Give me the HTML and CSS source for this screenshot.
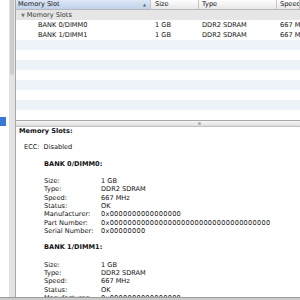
FILE: index.html
```html
<!DOCTYPE html>
<html lang="en">
<head>
  <meta charset="UTF-8" />
  <title>System Profiler - Memory</title>
  <link rel="stylesheet" href="styles.css">
</head>
<body>
  <div class="window">
    <div class="sidebar">
      <div class="source-item selected"></div>
    </div>
    <div class="scroller"><div class="thumb"></div></div>

    <div class="main">
      <div class="table">
        <div class="row head">
          <div class="cell c1 sorted">Memory Slot <span class="arrow">▲</span></div>
          <div class="cell c2">Size</div>
          <div class="cell c3">Type</div>
          <div class="cell c4">Speed</div>
        </div>
        <div class="row group">
          <div class="cell c1"><span class="disclosure">▼</span>Memory Slots</div>
          <div class="cell c2"></div>
          <div class="cell c3"></div>
          <div class="cell c4"></div>
        </div>
        <div class="row">
          <div class="cell c1 child">BANK 0/DIMM0</div>
          <div class="cell c2">1 GB</div>
          <div class="cell c3">DDR2 SDRAM</div>
          <div class="cell c4">667 MHz</div>
        </div>
        <div class="row">
          <div class="cell c1 child">BANK 1/DIMM1</div>
          <div class="cell c2">1 GB</div>
          <div class="cell c3">DDR2 SDRAM</div>
          <div class="cell c4">667 MHz</div>
        </div>
        <div class="row alt"></div>
        <div class="row"></div>
        <div class="row alt"></div>
        <div class="row"></div>
        <div class="row alt"></div>
        <div class="row"></div>
        <div class="row alt"></div>
        <div class="row"></div>
      </div>

      <div class="splitter"><span class="dimple"></span></div>

      <div class="details">
        <h3>Memory Slots:</h3>
        <div class="ecc"><span class="key">ECC:</span><span>Disabled</span></div>

        <h4>BANK 0/DIMM0:</h4>
        <div class="props">
          <span>Size:</span><span>1 GB</span>
          <span>Type:</span><span>DDR2 SDRAM</span>
          <span>Speed:</span><span>667 MHz</span>
          <span>Status:</span><span>OK</span>
          <span>Manufacturer:</span><span class="hex">0x0000000000000000</span>
          <span>Part Number:</span><span class="hex">0x000000000000000000000000000000000000</span>
          <span>Serial Number:</span><span class="hex">0x00000000</span>
        </div>

        <h4>BANK 1/DIMM1:</h4>
        <div class="props">
          <span>Size:</span><span>1 GB</span>
          <span>Type:</span><span>DDR2 SDRAM</span>
          <span>Speed:</span><span>667 MHz</span>
          <span>Status:</span><span>OK</span>
          <span>Manufacturer:</span><span class="hex">0x0000000000000000</span>
        </div>
      </div>
    </div>
  </div>
  <div class="bottom-line"></div>
</body>
</html>
```

FILE: styles.css
```css
* {
  box-sizing: border-box;
}

body {
  margin: 0;
  font-family: 'DejaVu Sans', Verdana, sans-serif;
  font-size: 6.6px;
  color: #111;
  background: white;
  overflow: hidden;
}

.window {
  display: flex;
  height: 297px;
  overflow: hidden;
}

.sidebar {
  width: 9px;
  padding-top: 117px;
  background: white;
}

.source-item {
  height: 9px;
  width: 6px;
}

.source-item.selected {
  background: #3a78d6;
}

.scroller {
  width: 7px;
  background: #e3e3e3;
  border-right: 1px solid #a9a9a9;
  padding: 0 1px;
}

.thumb {
  height: 75px;
  border-radius: 0 0 3px 3px;
  background: #cdcdcd;
}

.main {
  flex: 1;
  display: flex;
  flex-direction: column;
  min-width: 0;
}

.table {
  height: 120px;
  flex-shrink: 0;
  overflow: hidden;
}

.row {
  display: flex;
  height: 10px;
  line-height: 10px;
  white-space: nowrap;
}

.row.alt {
  background: #eef2f9;
}

.cell {
  overflow: hidden;
  padding-left: 3px;
}

.c1 { width: 135px; padding-left: 2px; }
.c2 { width: 48px; padding-left: 4px; }
.c3 { width: 78px; }
.c4 { flex: 1; }

.row.head {
  line-height: 9px;
  background: linear-gradient(#fdfdfd, #e8e8e8);
  border-bottom: 1px solid #b8b8b8;
}

.row.head .cell {
  border-right: 1px solid #c6c6c6;
}

.row.head .sorted {
  background: linear-gradient(#dde7f5, #bfd1ea);
  position: relative;
}

.arrow {
  position: absolute;
  right: 4px;
  font-size: 4px;
  color: #666;
}

.row.group {
  background: #e6e6e6;
  color: #333;
}

.disclosure {
  font-size: 5px;
  color: #777;
  margin: 0 2px 0 3px;
}

.child {
  padding-left: 22px;
}

.splitter {
  height: 7px;
  flex-shrink: 0;
  background: linear-gradient(#f6f6f6, #dedede);
  border-top: 1px solid #a8a8a8;
  border-bottom: 1px solid #c0c0c0;
}

.dimple {
  display: block;
  width: 3px;
  height: 3px;
  margin: 1px 0 0 182px;
  border-radius: 50%;
  background: #adadad;
}

.details {
  padding: 0 0 0 3px;
  line-height: 8.33px;
}

.details h3 {
  margin: 0 0 8px 0;
  font-size: 6.6px;
}

.ecc {
  margin-left: 5px;
}

.ecc .key {
  margin-right: 4px;
}

.details h4 {
  margin: 8px 0 9px 25px;
  font-size: 6.6px;
}

.props {
  display: grid;
  grid-template-columns: 57px auto;
  margin-left: 25px;
  white-space: nowrap;
}

.hex {
  letter-spacing: 0.27px;
}

.bottom-line {
  height: 3px;
  background: #cbcbcb;
  border-top: 1px solid #9c9c9c;
}
```
